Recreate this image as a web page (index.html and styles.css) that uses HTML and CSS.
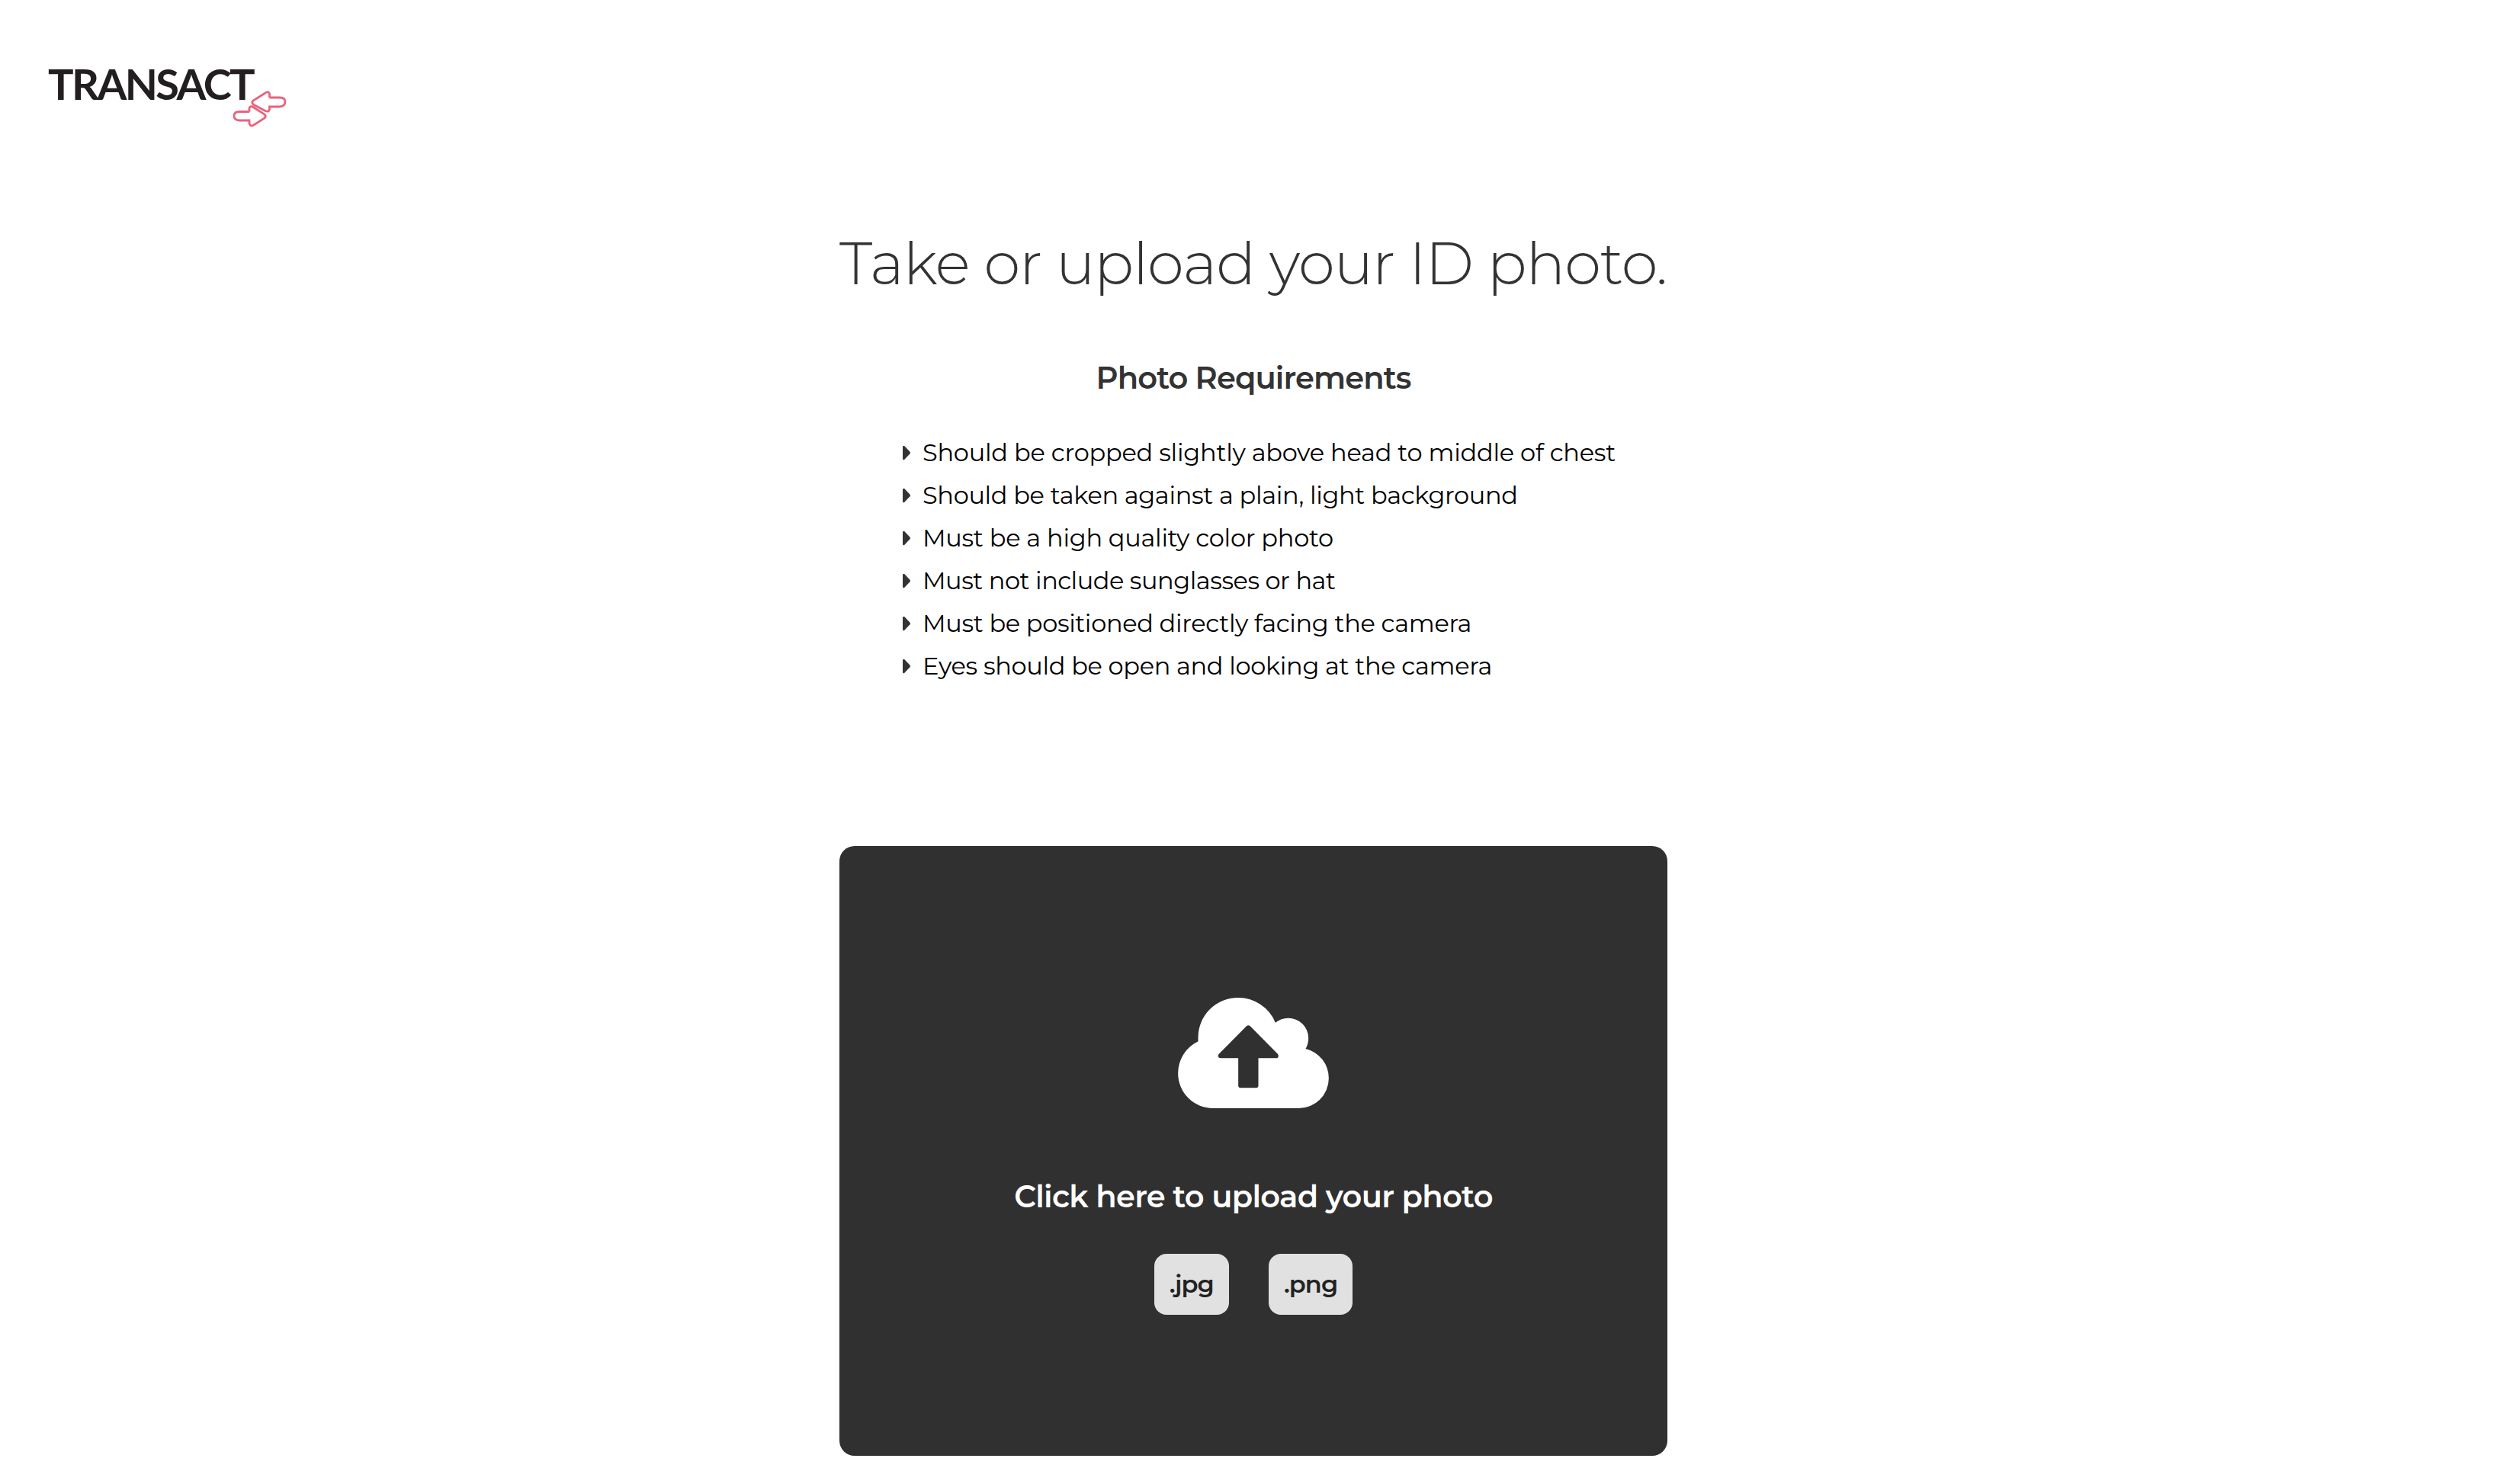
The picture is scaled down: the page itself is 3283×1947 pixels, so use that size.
FILE: index.html
```html
<!DOCTYPE html>
<html lang="en">
<head>
<meta charset="utf-8">
<title>ID photo upload</title>
<link rel="stylesheet" href="styles.css">
</head>
<body>
<header class="header">
  <div class="logo">
    <span class="logo-text">TRANSACT</span>
    <svg class="logo-arrows" viewBox="0 0 72 48" width="72" height="48"><path d="M46.500 10V5Q45 1 41 4L25 14Q22.500 16.500 25 19L41 27.500Q46 29.500 46.500 25V22H60Q67 21 67 15.500T60 10H46.500M20 28.500V24Q21 20.500 25 22.500L40 32Q42.500 34.500 40 37L25 46.500Q21 48 20 44V40H7Q0 39.500 0 34T7 28.500H20" fill="none" stroke="#e8637c" stroke-width="2.800"/></svg>
  </div>
</header>
<main class="content">
  <h1 class="title">Take or upload your ID photo.</h1>
  <h2 class="subtitle">Photo Requirements</h2>
  <ul class="requirements">
    <li class="item-1">Should be cropped slightly above head to middle of chest</li>
    <li>Should be taken against a plain, light background</li>
    <li class="item-3">Must be a high quality color photo</li>
    <li class="item-4">Must not include sunglasses or hat</li>
    <li>Must be positioned directly facing the camera</li>
    <li>Eyes should be open and looking at the camera</li>
  </ul>
  <section class="upload">
    <svg class="cloud" viewBox="0 0 593 435"><path fill="#fff" fill-rule="evenodd" d="M137 435A137 137 0 0 1 0 298A138 138 0 0 1 79 172V157A156 157 0 0 1 235 0A158 158 0 0 1 383 98A79 79 0 0 1 434 80A79 79 0 0 1 513 158A84 84 0 0 1 502 201A118 118 0 0 1 593 317A118 118 0 0 1 475 435ZM270 111L161 221C154 229 159 238 168 238H237V346Q237 355 246 355H307Q316 355 316 346V238H386C395 238 398 229 392 221L283 111Q276 106 270 111Z"/></svg>
    <p class="upload-text">Click here to upload your photo</p>
    <div class="formats"><span class="format">.jpg</span><span class="format">.png</span></div>
  </section>
</main>
</body>
</html>
```
FILE: styles.css
```css
* { box-sizing: border-box; }
body { margin: 0; background: #fff; color: #333; font-family: Montserrat, Inter, sans-serif; }
.header { height: 291px; padding: 82px 0 0 63px; }
.logo { position: relative; width: 320px; height: 84px; }
.logo-text { font: 700 56px/56px Lato, sans-serif; letter-spacing: -2.6px; color: #231f20; }
.logo-arrows { position: absolute; left: 244px; top: 36px; overflow: visible; }
.content { width: 1086px; margin-left: 1101px; }
.title { margin: 0; height: 110px; font-size: 76.8px; line-height: 110px; font-weight: 300; letter-spacing: -1.03px; white-space: nowrap; }
.subtitle { margin: 65px 0 0; height: 60px; text-align: center; font-size: 40px; line-height: 60px; font-weight: 600; letter-spacing: -0.9px; }
.requirements { list-style: none; margin: 40px 0 0; padding: 0 0 0 83px; color: #000; font-size: 32px; line-height: 56px; letter-spacing: -0.33px; }
.requirements li { display: flex; align-items: center; gap: 16px; height: 56px; white-space: nowrap; }
.requirements li::before { content: ""; width: 10px; height: 19px; background: #333; clip-path: polygon(0 6%, 10% 0, 22% 3%, 95% 43%, 100% 50%, 95% 57%, 22% 97%, 10% 100%, 0 94%); }
.requirements .item-1 { letter-spacing: -0.23px; }
.requirements .item-3 { letter-spacing: -0.27px; }
.requirements .item-4 { letter-spacing: -0.46px; }
.upload { display: flex; flex-direction: column; align-items: center; height: 800px; margin-top: 208px; padding-top: 199px; border-radius: 20px; background: #303030; }
.cloud { width: 198px; height: 145px; }
.upload-text { margin: 86px 0 0; color: #fff; font-size: 40px; line-height: 60px; font-weight: 600; letter-spacing: -0.72px; }
.formats { display: flex; gap: 52px; margin-top: 45px; }
.format { height: 80px; padding: 0 20px; border-radius: 16px; background: #e1e1e1; color: #222; font-size: 32px; line-height: 80px; font-weight: 600; letter-spacing: -0.9px; }
```
